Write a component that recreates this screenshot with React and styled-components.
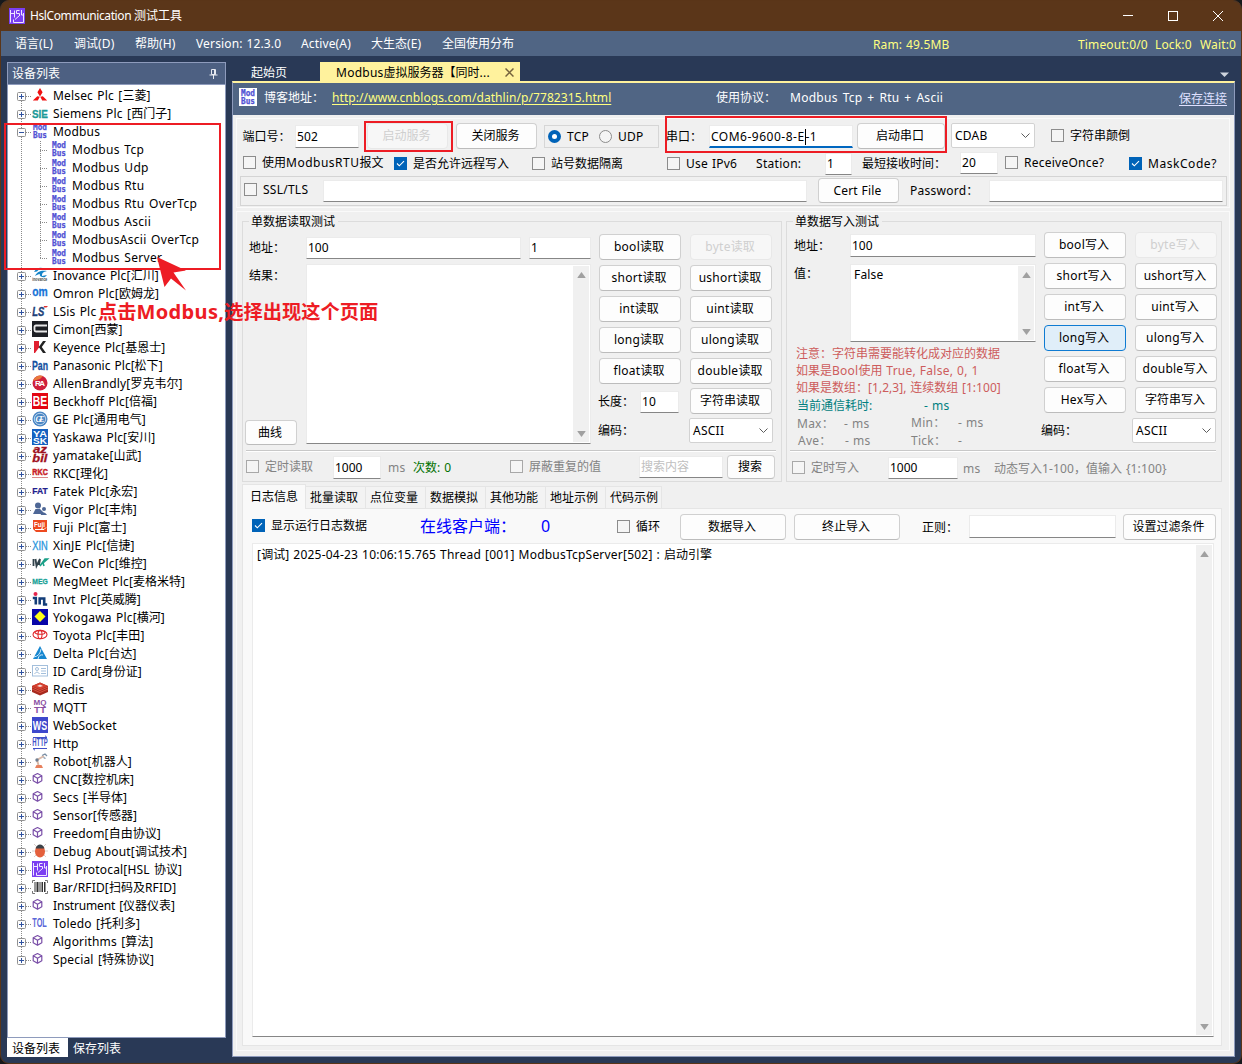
import React from "react";
import styled, { createGlobalStyle, css } from "styled-components";

const Global = createGlobalStyle`
  * { box-sizing: border-box; }
  html, body { margin: 0; padding: 0; background: #17191c; }
  body {
    font-family: "Noto Sans", "Noto Sans CJK SC", sans-serif;
    font-size: 12px;
    line-height: 18px;
    color: #000;
    overflow: hidden;
  }
`;

/* ---------- text ---------- */

const Latin = styled.span`
  letter-spacing: ${(p) => p.$ls}px;
  word-spacing: ${(p) => p.$ws}px;
`;

const CJK = /([\u2e80-\uffff]+)/;

function Mix({ children, ls = 0.25, ws = 0.5 }) {
  return String(children)
    .split(CJK)
    .filter(Boolean)
    .map((part, i) =>
      CJK.test(part) ? <span key={i}>{part}</span> : <Latin key={i} $ls={ls} $ws={ws}>{part}</Latin>
    );
}

const LabelBox = styled.div`
  margin-top: ${(p) => p.$t || 0}px;
  height: 18px;
  line-height: 18px;
  white-space: pre;
  width: 0;
  color: ${(p) => p.$color || "inherit"};
  font-size: ${(p) => p.$size || 12}px;
`;

function Label({ t, color, size, ls, ws, children }) {
  return (
    <LabelBox $t={t} $color={color} $size={size}>
      <Mix ls={ls} ws={ws}>{children}</Mix>
    </LabelBox>
  );
}

/* ---------- layout ---------- */

const tracks = (xs) => xs.slice(1).map((x, i) => `${x - xs[i]}px`).join(" ") + " auto";

const Line = styled.div`
  display: grid;
  grid-template-columns: ${(p) => tracks(p.$x)};
  justify-content: start;
  align-items: start;
  height: ${(p) => p.$h}px;
  padding-left: ${(p) => p.$x[0] - p.$from}px;
`;

const Window = styled.div`
  width: 1242px;
  height: 1064px;
  background: #293956;
  border: 1px solid #5a3518;
  border-radius: 9px;
  overflow: hidden;
  display: flex;
  flex-direction: column;
`;

const TitleBar = styled.header`
  height: 30px;
  flex: none;
  background: #5b3619;
  color: #fff;
  display: flex;
  align-items: center;
  padding: 0 1px 0 8px;
`;

const TitleText = styled.div`
  flex: 1;
  padding-left: 5px;
`;

const WindowButton = styled.div`
  width: 45px;
  display: flex;
  justify-content: center;
`;

const MenuBar = styled.nav`
  height: 25px;
  flex: none;
  background: #506584;
  color: #fff;
`;

const Workspace = styled.div`
  flex: 1;
  display: flex;
  min-height: 0;
`;

const SidePanel = styled.aside`
  width: 219px;
  margin: 6px 6px 0 6px;
  display: flex;
  flex-direction: column;
`;

const SideFrame = styled.div`
  height: 976px;
  border: 1px solid #8e9bbc;
  display: flex;
  flex-direction: column;
`;

const SideHead = styled.div`
  height: 21px;
  background: #4d6082;
  color: #fff;
  display: flex;
  align-items: center;
  justify-content: space-between;
  padding: 0 7px 0 4px;
`;

const Tree = styled.div`
  flex: 1;
  background: #fff;
  border-top: 1px solid #8e9bbc;
  padding: 2px 0 0 9px;
`;

const SideTabs = styled.div`
  display: flex;
`;

const SideTab = styled.div`
  width: 61px;
  height: 19px;
  padding: 2px 0 0 5px;
  line-height: 17px;
  white-space: nowrap;
  background: ${(p) => (p.$on ? "#fff" : "transparent")};
  color: ${(p) => (p.$on ? "#000" : "#fff")};
`;

/* ---------- tree ---------- */

const TreeRow = styled.div`
  display: flex;
  height: 18px;
`;

const Guide = styled.div`
  width: ${(p) => p.$w}px;
  display: flex;
  flex-direction: column;
  align-items: center;
`;

const Dots = styled.div`
  width: 1px;
  height: ${(p) => p.$h}px;
  background: ${(p) =>
    p.$off ? "none" : "repeating-linear-gradient(#8a8a8a 0 1px, transparent 1px 2px)"};
`;

const Across = styled.div`
  width: ${(p) => p.$w}px;
  height: 1px;
  margin-top: 9px;
  background: repeating-linear-gradient(90deg, #8a8a8a 0 1px, transparent 1px 2px);
`;

const ChildAcross = styled(Across)`
  margin-left: -14px;
  margin-right: 3px;
`;

const Toggle = styled.svg`
  width: 9px;
  height: 9px;
  display: block;
`;

const NodeIcon = styled.svg`
  width: 16px;
  height: 16px;
  display: block;
  overflow: visible;
`;

const NodeText = styled.div`
  padding-left: 5px;
  white-space: pre;
  height: 18px;
  line-height: 18px;
`;

function Glyph({ text, color, size = 8, x = 0.3, y = 11, w = 15, italic, font = "Liberation Sans", weight = 700, bold = 0 }) {
  return (
    <text x={x} y={y} fill={color} stroke={bold ? color : "none"} strokeWidth={bold} fontSize={size} fontWeight={weight}
      fontFamily={`"${font}", sans-serif`} fontStyle={italic ? "italic" : "normal"} textLength={w}
      lengthAdjust="spacingAndGlyphs">{text}</text>
  );
}

const modIcon = (
  <>
    <Glyph text="Mod" color="#5252d4" size={8} x={1} y={6.5} w={14} font="DejaVu Sans Mono" bold={0.25} />
    <Glyph text="Bus" color="#5252d4" size={8} x={1} y={14.5} w={14} font="DejaVu Sans Mono" bold={0.25} />
  </>
);

const hslIcon = (
  <>
    <rect width="16" height="16" fill="#7b3ff2" />
    <g stroke="#efe6ff" fill="none" strokeWidth="1">
      <path d="M1.500 2v12.500M1.500 5.500h4M5.500 2.500v7M10.500 2.500h-3v3h3v2.500M12.500 2v5h2.500M6 11.500l4.500-4M14.500 5v9.500h-10v-3" />
    </g>
  </>
);

const cube = (
  <g fill="none" stroke="#7a4fa8" strokeWidth="1.2" strokeLinejoin="round">
    <path d="M5.500 2.500l4.300 2.200v5l-4.300 2.600-4.300-2.600v-5zM1.200 4.700l4.300 2.500 4.300-2.500M5.500 7.200v5" />
  </g>
);

const icons = {
  melsec: <g fill="#f01010"><path d="M8 1l2.600 4.300L8 9.500 5.400 5.300zM5.300 9.300l2.500.4L5.800 13.500H.8zM8.300 9.700l2.500-.4 4.400 4.200h-5z" /></g>,
  siemens: <Glyph text="SIE" color="#1c9a98" size={11.500} y={12.500} w={16} x={0} bold={0.3} />,
  modbus: modIcon,
  inovance: (
    <>
      <path d="M2 5c3-5 7-5 11-3-3-.5-6 0-8 2.500zM3 9c2-5 7-6 12-5-4 1-5 2-5 5l5-1-2 2c-4 1-6-2-5-3-2 0-3 1-5 2z" fill="#1684c8" />
      <Glyph text="inovance" color="#444" size={5.500} y={14} />
    </>
  ),
  omron: <Glyph text="om" color="#1673d8" size={13} y={11} w={15.500} bold={0.3} />,
  ls: <><Glyph text="LS" color="#1d3f78" size={12} y={13} w={12} italic bold={0.4} /><path d="M12 3h4l-1.500 1.500h-3z" fill="#d33" /></>,
  cimon: <><rect width="16" height="16" fill="#1d1f24" /><path d="M15 4.500H4q-1.500 0-1.500 1.500v3q0 1.500 1.500 1.500h11" fill="none" stroke="#e8e8e8" strokeWidth="1.800" /></>,
  keyence: <><path d="M2 2h5v6.500L3 14H2z" fill="#e02030" /><path d="M11 2h3L9.800 8l4.200 6h-3L6.800 8z" fill="#222" /></>,
  pan: <Glyph text="Pan" color="#1450a0" size={13} y={12.500} w={16} x={0} font="Liberation Sans Narrow" bold={0.3} />,
  ra: <><circle cx="8" cy="8" r="7.500" fill="#cf1f3c" /><path d="M1 6a7.500 7.500 0 0 1 10-5L8 4z" fill="#e87a3c" /><text x="3" y="11" fontSize="8" fontWeight="700" fill="#fff" fontFamily="Liberation Sans" textLength="10">RA</text></>,
  be: <><rect width="16" height="16" fill="#e30613" /><Glyph text="BE" color="#fff" size={14.500} x={0.8} y={13} w={14.400} /></>,
  ge: <><circle cx="8" cy="8" r="7.500" fill="#4a86c4" /><circle cx="8" cy="8" r="5.700" fill="none" stroke="#d5e4f4" strokeWidth=".8" /><text x="3.500" y="11" fontSize="8" fill="#fff" fontStyle="italic" fontFamily="Liberation Serif" fontWeight="700" textLength="9">GE</text></>,
  yask: <><rect width="16" height="16" fill="#1661c0" /><Glyph text="YA" color="#fff" size={8.500} x={1} y={7.500} w={14} /><Glyph text="SK" color="#fff" size={8.500} x={1} y={14.700} w={14} /></>,
  azbil: <><Glyph text="az" color="#9e1020" size={10} x={1} y={6} w={14} italic bold={0.3} /><Glyph text="bil" color="#9e1020" size={11} y={14.800} w={15} italic bold={0.3} /></>,
  rkc: <><Glyph text="RKC" color="#c81d28" size={9} y={10} w={15.500} bold={0.5} /><path d="M0 12.500h16" stroke="#d98a8a" /></>,
  fat: <Glyph text="FAT" color="#20208c" size={8.500} y={11} w={15.500} bold={0.2} />,
  vigor: <g fill="#4e6796"><circle cx="6" cy="4.500" r="3" /><path d="M1 13l2.500-5 4.500 0 2 5H1zM7 7l4 4 3.500 3H9z" /><circle cx="12" cy="8" r="2" /><path d="M9 14q3-5 6 0z" /></g>,
  fuji: <><path d="M1 1h14v12H4l-3-3z" fill="#ee4a20" /><Glyph text="Fuji" color="#fff" size={7} x={2} y={8} w={11} /><path d="M3 10.500h9l2-2" stroke="#fff" fill="none" /></>,
  xin: <Glyph text="XIN" color="#2694dc" size={12} y={12.500} w={15.500} weight={400} bold={0.3} />,
  wecon: <><path d="M1.500 4v7M3.500 4l1 7L8 4l-1 6" stroke="#30414a" strokeWidth="1.800" fill="none" /><path d="M8 11l5-7h2.500l-4.500 4 1 3" stroke="#1ba088" strokeWidth="1.600" fill="none" /></>,
  meg: <Glyph text="MEG" color="#17a196" size={8} y={11} w={15.500} bold={0.3} />,
  invt: <><circle cx="3.500" cy="3" r="2" fill="#e6254c" /><path d="M0.800 7h3v6.500M7.700 13.500V7.500h4.500v6h3" stroke="#123d78" strokeWidth="2.600" fill="none" /></>,
  yoko: <><rect width="16" height="16" fill="#0806a8" /><path d="M8 2l5.500 5.500L8 13 2.500 7.500z" fill="#ffff18" /></>,
  toyota: <g fill="none" stroke="#e0282c" strokeWidth="1.100"><ellipse cx="8" cy="7.500" rx="7" ry="4.300" /><ellipse cx="8" cy="5.500" rx="5" ry="1.800" /><ellipse cx="8" cy="7.500" rx="2" ry="4.300" /></g>,
  delta: <><path d="M8 1l7 13H1z" fill="#1787d0" /><path d="M2 12q6-1 7-8M6 14q1-5 5-4" stroke="#cfe8f8" fill="none" strokeWidth="1" /></>,
  card: <g fill="none" stroke="#a3bfdc"><rect x=".5" y="2.500" width="15" height="10.500" /><circle cx="5" cy="6" r="1.500" /><path d="M2.500 11q2.500-4 5 0M9 5.500h5M9 8h5M9 10.500h5" /></g>,
  redis: <><path d="M0 5l8-3.500L16 5v6l-8 3.500L0 11z" fill="#a72a1e" /><path d="M0 5l8-3.500L16 5 8 8.500z" fill="#d5402e" /><path d="M0 8l8 3.500L16 8M0 6l8 3.500L16 6" stroke="#d9503e" fill="none" /><path d="M5 5l3-1.500L11 5 8 6z" fill="#fff" opacity=".8" /></>,
  mqtt: <><Glyph text="MQ" color="#8a50a2" size={8} x={1.500} y={6} w={13} /><Glyph text="TT" color="#8a50a2" size={8.500} x={2} y={14} w={12} /></>,
  ws: <><rect width="16" height="16" fill="#3d48cc" /><Glyph text="WS" color="#fff" size={13} x={0.8} y={12.700} w={14.400} /></>,
  http: <><Glyph text="HTTP" color="#4050c8" size={10} y={11.300} w={15.400} /><path d="M1 2.500h14l-2-1.800M15 13.500H1l2 1.800" stroke="#4050c8" fill="none" /></>,
  robot: <><path d="M3 15h8l-1.500-3h-5z" fill="#e8805c" /><path d="M6.500 12L5 7l7-4" stroke="#d9b9a8" strokeWidth="2" fill="none" /><circle cx="5" cy="7" r="1.700" fill="#6f7f92" /><path d="M10 2.500l3-1.500 2 2M11.500 4.500l2 1" stroke="#7a8fa5" fill="none" strokeWidth="1.300" /></>,
  cube,
  bug: <><path d="M2 1l3 3M14 1l-3 3M0 8h16M2 14l3-3M14 14l-3-3" stroke="#d8ceca" fill="none" /><ellipse cx="8" cy="8.500" rx="5" ry="6" fill="#e4603c" /><path d="M3.500 5.500Q5 1.500 8 1.500t4.500 4z" fill="#3c4248" /></>,
  hsl: hslIcon,
  bar: <g fill="#333"><path d="M2.500 3h1v10h-1zM4.500 3h2v10h-2zM7.500 3h1v10h-1zM9.500 3h1.500v10h-1.500zM12 3h1.500v10h-1.500z" /><path d="M.5 4V1.500H3M13 1.500h2.500V4M.5 12v2.500H3M13 14.500h2.500V12" fill="none" stroke="#777" /></g>,
  tol: <Glyph text="TOL" color="#5a68d8" size={12.500} y={12} w={14.500} font="Liberation Sans Narrow" />,
};

const nodes = [
  ["melsec", "Melsec Plc [三菱]"],
  ["siemens", "Siemens Plc [西门子]"],
  ["modbus", "Modbus", ["Modbus Tcp", "Modbus Udp", "Modbus Rtu", "Modbus Rtu OverTcp", "Modbus Ascii", "ModbusAscii OverTcp", "Modbus Server"]],
  ["inovance", "Inovance Plc[汇川]"],
  ["omron", "Omron Plc[欧姆龙]"],
  ["ls", "LSis Plc"],
  ["cimon", "Cimon[西蒙]"],
  ["keyence", "Keyence Plc[基恩士]"],
  ["pan", "Panasonic Plc[松下]"],
  ["ra", "AllenBrandly[罗克韦尔]"],
  ["be", "Beckhoff Plc[倍福]"],
  ["ge", "GE Plc[通用电气]"],
  ["yask", "Yaskawa Plc[安川]"],
  ["azbil", "yamatake[山武]"],
  ["rkc", "RKC[理化]"],
  ["fat", "Fatek Plc[永宏]"],
  ["vigor", "Vigor Plc[丰炜]"],
  ["fuji", "Fuji Plc[富士]"],
  ["xin", "XinJE Plc[信捷]"],
  ["wecon", "WeCon Plc[维控]"],
  ["meg", "MegMeet Plc[麦格米特]"],
  ["invt", "Invt Plc[英威腾]"],
  ["yoko", "Yokogawa Plc[横河]"],
  ["toyota", "Toyota Plc[丰田]"],
  ["delta", "Delta Plc[台达]"],
  ["card", "ID Card[身份证]"],
  ["redis", "Redis"],
  ["mqtt", "MQTT"],
  ["ws", "WebSocket"],
  ["http", "Http"],
  ["robot", "Robot[机器人]"],
  ["cube", "CNC[数控机床]"],
  ["cube", "Secs [半导体]"],
  ["cube", "Sensor[传感器]"],
  ["cube", "Freedom[自由协议]"],
  ["bug", "Debug About[调试技术]"],
  ["hsl", "Hsl Protocal[HSL 协议]"],
  ["bar", "Bar/RFID[扫码及RFID]"],
  ["cube", "Instrument [仪器仪表]"],
  ["tol", "Toledo [托利多]"],
  ["cube", "Algorithms [算法]"],
  ["cube", "Special [特殊协议]"],
];

const tight = { Instrument: -0.15, Panasonic: 0, Keyence: 0.1 };

function Node({ icon, text, kids, first, last }) {
  const ls = tight[text.split(" ")[0]] ?? 0.17;
  return (
    <>
      <TreeRow>
        <Guide $w={9}>
          <Dots $h={5} $off={first} />
          <Toggle viewBox="0 0 9 9">
            <rect x=".5" y=".5" width="8" height="8" rx="1" fill="#fdfdfd" stroke="#919191" />
            <path d={kids ? "M2 4.500h5" : "M2 4.500h5M4.500 2v5"} stroke="#2f52a0" />
          </Toggle>
          <Dots $h={4} $off={last} />
        </Guide>
        <Across $w={6} />
        <NodeIcon viewBox="0 0 16 16">{icons[icon]}</NodeIcon>
        <NodeText><Mix ls={ls} ws={1}>{text}</Mix></NodeText>
      </TreeRow>
      {kids && kids.map((kid, i) => (
        <TreeRow key={kid}>
          <Guide $w={9}><Dots $h={18} /></Guide>
          <Guide $w={28}><Dots $h={i === kids.length - 1 ? 10 : 18} /></Guide>
          <ChildAcross $w={8} />
          <NodeIcon viewBox="0 0 16 16">{modIcon}</NodeIcon>
          <NodeText><Mix ls={0.28} ws={1.2}>{kid}</Mix></NodeText>
        </TreeRow>
      ))}
    </>
  );
}

/* ---------- document area ---------- */

const DocArea = styled.main`
  width: 1003px;
  margin-top: 6px;
  display: flex;
  flex-direction: column;
`;

const DocTabs = styled.div`
  height: 19px;
  display: flex;
  align-items: flex-start;
  color: #fff;
`;

const IdleTab = styled.div`
  width: 88px;
  height: 19px;
  padding: 2px 0 0 19px;
  line-height: 17px;
`;

const ActiveTab = styled.div`
  width: 200px;
  height: 19px;
  background: #fff29d;
  color: #000;
  display: flex;
  align-items: center;
  justify-content: space-between;
  padding: 2px 6px 0 16px;
  white-space: pre;
`;

const TabMenu = styled.div`
  margin: 10px 6px 0 auto;
`;

const Svg = styled.svg`
  display: block;
`;

const DocFrame = styled.div`
  border-top: 2px solid #fff29d;
  border-left: 1px solid #8e9bbc;
  border-right: 1px solid #8e9bbc;
  border-bottom: 1px solid #8e9bbc;
  background: #f0f0f0;
  height: 976px;
`;

const DocHead = styled.div`
  background: #506584;
  color: #fff;
  height: 32px;
`;

const ModBadge = styled.svg`
  width: 18px;
  height: 18px;
  margin-top: 5px;
  background: #fff;
`;

const Link = styled.a`
  margin-top: ${(p) => p.$t}px;
  white-space: nowrap;
  width: max-content;
  height: 18px;
  color: ${(p) => p.$color};
  text-decoration: underline;
  text-underline-offset: 2px;
`;

const Panel = styled.section`
  margin: 3px 0 0 3px;
  width: 994px;
  height: ${(p) => p.$h}px;
  border: 1px solid #fafafa;
`;

const TlsPanel = styled.div`
  width: 987px;
  height: 30px;
  margin-left: 3px;
  border: 1px solid #d4d4d4;
`;

const Button = styled.button`
  margin: ${(p) => p.$t || 0}px 0 0 0;
  width: ${(p) => p.$w || 82}px;
  height: ${(p) => p.$h || 26}px;
  padding: 0;
  font: inherit;
  line-height: 18px;
  white-space: nowrap;
  color: #000;
  background: #fdfdfd;
  border: 1px solid #d0d0d0;
  border-bottom-color: #bcbcbc;
  border-radius: 4px;
  ${(p) => p.$nudge && css`
    padding: 0 2px 0 0;
  `}
  ${(p) => p.disabled && css`
    color: #cfcfcf;
    background: #f7f7f7;
    border-color: #e8e8e8;
  `}
  ${(p) => p.$hot && css`
    background: #e0eef9;
    border-color: #0f7bd2;
  `}
`;

const Field = styled.div`
  margin-top: ${(p) => p.$t || 0}px;
  width: ${(p) => p.$w}px;
  height: ${(p) => p.$h || 22}px;
  background: #fff;
  border: 1px solid #ebebeb;
  border-bottom: ${(p) => (p.$focus ? "2px solid #0067c0" : "1px solid #868686")};
  padding: ${(p) => (p.$pt === undefined ? 1 : p.$pt)}px 2px 0 1px;
  color: ${(p) => p.$color || "#000"};
  line-height: 18px;
  white-space: pre;
  display: flex;
`;

const Caret = styled.span`
  width: 1px;
  height: 16px;
  margin-top: 1px;
  background: #000;
`;

const Area = styled(Field)`
  justify-content: space-between;
  padding: 0 0 0 3px;
`;

const Scroll = styled.div`
  width: 16px;
  margin: 1px 1px 1px 0;
  background: #f0f0f0;
  display: flex;
  flex-direction: column;
  justify-content: space-between;
  align-items: center;
  padding: 6px 0 5px;
`;

function ScrollBar() {
  return (
    <Scroll>
      <Svg width="9" height="6"><path d="M4.500 0L8.500 5.500q.3.500-.5.500H1q-.8 0-.5-.5z" fill="#a0a0a0" /></Svg>
      <Svg width="9" height="6"><path d="M4.500 6L8.500.5Q8.800 0 8 0H1Q.2 0 .5.500z" fill="#a0a0a0" /></Svg>
    </Scroll>
  );
}

const Combo = styled.div`
  margin-top: ${(p) => p.$t || 0}px;
  width: 84px;
  height: 25px;
  background: #fff;
  border: 1px solid #d2d2d2;
  border-radius: 2px;
  padding: 0 4px 0 3px;
  display: flex;
  align-items: center;
  justify-content: space-between;
`;

function Select({ t, children }) {
  return (
    <Combo $t={t}>
      <Mix>{children}</Mix>
      <Svg width="9" height="6"><path d="M.5.500l4 4 4-4" fill="none" stroke="#5c5c5c" /></Svg>
    </Combo>
  );
}

const CheckBox = styled.svg`
  margin-top: ${(p) => p.$t}px;
  width: 13px;
  height: 13px;
  display: block;
`;

function Check({ t, on, dim }) {
  return (
    <CheckBox $t={t} viewBox="0 0 13 13">
      <rect x=".5" y=".5" width="12" height="12" fill={on ? "#0063b8" : "#f5f5f5"} stroke={on ? "#0063b8" : dim ? "#a8a8a8" : "#8c8c8c"} />
      {on && <path d="M3 6.500l2.300 2.300L10 4.200" fill="none" stroke="#fff" strokeWidth="1.100" />}
    </CheckBox>
  );
}

const RadioBox = styled.div`
  margin-top: 6px;
  width: 115px;
  height: 23px;
  border: 1px solid #d6d6d6;
`;

function Radio({ on }) {
  return (
    <CheckBox $t={4} viewBox="0 0 13 13">
      <circle cx="6.500" cy="6.500" r={on ? 6.500 : 6} fill={on ? "#0063b8" : "#f5f5f5"} stroke={on ? "none" : "#8c8c8c"} />
      {on && <circle cx="6.500" cy="6.500" r="2.500" fill="#fff" />}
    </CheckBox>
  );
}

const Groups = styled.div`
  display: flex;
  gap: 4px;
  padding: 9px 0 0 5px;
`;

const Group = styled.div`
  width: ${(p) => p.$w}px;
  height: 261px;
  border: 1px solid #dcdcdc;
`;

const Legend = styled.div`
  width: max-content;
  height: 18px;
  line-height: 20px;
  margin: -10px 0 0 6px;
  padding: 0 3px 0 2px;
  background: #f0f0f0;
`;

const GroupBody = styled.div`
  display: flex;
  height: 220px;
`;

const Column = styled.div`
  width: ${(p) => p.$w}px;
  padding-top: ${(p) => p.$pt || 0}px;
`;

const ButtonGrid = styled.div`
  display: grid;
  grid-template-columns: 82px 82px;
  gap: 5px 9px;
  margin: 0 0 ${(p) => p.$mb}px ${(p) => p.$ml || 0}px;
`;

const Stack = styled.div`
  height: 181px;
  display: flex;
  flex-direction: column;
  justify-content: space-between;
`;

const Rule = styled.div`
  height: 2px;
  margin: 0 5px 0 3px;
  border-top: 1px solid #c8c8c8;
  border-bottom: 1px solid #fff;
`;

const Note = styled.div`
  height: 17px;
  line-height: 19px;
  padding-left: 9px;
  color: #cd5c5c;
  white-space: nowrap;
`;

const CodeLabel = styled.div`
  margin: 4px 0 0 -3px;
  height: 18px;
  white-space: nowrap;
`;

const TabStrip = styled.div`
  height: 26px;
  padding-left: 5px;
  display: flex;
  align-items: flex-end;
`;

const Tab = styled.div`
  width: ${(p) => p.$w}px;
  height: ${(p) => (p.$on ? 25 : 22)}px;
  margin-bottom: ${(p) => (p.$on ? -1 : 0)}px;
  padding: ${(p) => (p.$on ? "3px 0 0 7px" : "2px 0 0 4px")};
  line-height: 18px;
  background: ${(p) => (p.$on ? "#f9f9f9" : "#f3f3f3")};
  border: 1px solid #e5e5e5;
  border-bottom: none;
  border-left-width: ${(p) => (p.$on ? 1 : 0)}px;
  white-space: nowrap;
`;

const Page = styled.div`
  width: 980px;
  height: 538px;
  margin-left: 5px;
  background: #f9f9f9;
  border: 1px solid #e5e5e5;
`;

const Log = styled(Area)`
  margin-left: 9px;
  padding: 0 0 0 4px;
`;

const LogText = styled.div`
  flex: 1;
  padding-top: 2px;
`;

/* ---------- annotations over the window ---------- */

const Mark = styled.div`
  position: absolute;
  left: ${(p) => p.$x}px;
  top: ${(p) => p.$y}px;
  width: ${(p) => p.$w}px;
  height: ${(p) => p.$h}px;
  border: 2px solid #ed1c24;
`;

const Caption = styled.div`
  position: absolute;
  left: 98px;
  top: 298px;
  font-size: 19.25px;
  line-height: 28px;
  font-weight: 700;
  color: #ed1c24;
  white-space: nowrap;

  ${Latin} {
    font-size: 20px;
  }
`;

const Pointer = styled.svg`
  position: absolute;
  left: 157px;
  top: 257px;
`;

const reads = ["bool", "byte", "short", "ushort", "int", "uint", "long", "ulong", "float", "double"];
const GREY = "#838383";

export default function App() {
  return (
    <>
      <Global />
      <Window>
        <TitleBar>
          <Svg width="16" height="16" viewBox="0 0 16 16">{hslIcon}</Svg>
          <TitleText><Mix ls={-0.4} ws={0}>HslCommunication 测试工具</Mix></TitleText>
          <WindowButton><Svg width="10" height="10"><path d="M0 4.500h10" stroke="#fff" /></Svg></WindowButton>
          <WindowButton><Svg width="10" height="10"><rect x=".5" y=".5" width="9" height="9" fill="none" stroke="#fff" /></Svg></WindowButton>
          <WindowButton><Svg width="10" height="10"><path d="M0 0l10 10M10 0L0 10" stroke="#fff" /></Svg></WindowButton>
        </TitleBar>
        <MenuBar>
          <Line $from={1} $h={25} $x={[15, 74, 135, 196, 301, 371, 442, 873, 1078, 1155, 1200]}>
            {["语言(L)", "调试(D)", "帮助(H)", "Version: 12.3.0", "Active(A)", "大生态(E)", "全国使用分布"].map((m) => (
              <Label key={m} t={4} ls={0.15}>{m}</Label>
            ))}
            {["Ram: 49.5MB", "Timeout:0/0", "Lock:0", "Wait:0"].map((m) => (
              <Label key={m} t={5} ls={0.15} color="#ffff80">{m}</Label>
            ))}
          </Line>
        </MenuBar>
        <Workspace>
          <SidePanel>
            <SideFrame>
              <SideHead>
                设备列表
                <Svg width="9" height="12"><path d="M2.500 1.500h4v5h-4zM5.500 1.500v5M.5 7h8M4.500 7v4" fill="none" stroke="#e6e9f0" /></Svg>
              </SideHead>
              <Tree>
                {nodes.map(([icon, text, kids], i) => (
                  <Node key={text} icon={icon} text={text} kids={kids} first={i === 0} last={i === nodes.length - 1} />
                ))}
              </Tree>
            </SideFrame>
            <SideTabs>
              <SideTab $on>设备列表</SideTab>
              <SideTab>保存列表</SideTab>
            </SideTabs>
          </SidePanel>
          <DocArea>
            <DocTabs>
              <IdleTab>起始页</IdleTab>
              <ActiveTab>
                <span><Mix>Modbus虚拟服务器【同时...</Mix></span>
                <Svg width="9" height="9"><path d="M.5.500l8 8M8.500.500l-8 8" stroke="#75633d" strokeWidth="1.500" /></Svg>
              </ActiveTab>
              <TabMenu><Svg width="9" height="5"><path d="M0 .5h9L4.500 5z" fill="#ced4dd" /></Svg></TabMenu>
            </DocTabs>
            <DocFrame>
              <DocHead>
                <Line $from={233} $h={32} $x={[239, 264, 332, 716, 790, 1179]}>
                  <ModBadge viewBox="-1 -1 18 18">{modIcon}</ModBadge>
                  <Label t={6}>博客地址：</Label>
                  <Link $t={6} $color="#ffff80"><Mix ls={0.08}>http://www.cnblogs.com/dathlin/p/7782315.html</Mix></Link>
                  <Label t={6}>使用协议：</Label>
                  <Label t={6} ls={0.28} ws={1.500}>Modbus Tcp + Rtu + Ascii</Label>
                  <Link $t={7} $color="#dfe0ff">保存连接</Link>
                </Line>
              </DocHead>
              <Panel $h={90}>
                <Line $from={237} $h={32} $x={[242.500, 295, 367, 456, 544, 666, 709, 857, 951, 1051, 1070]}>
                  <Label t={9}>端口号：</Label>
                  <Field $t={6} $w={64} $h={23} $pt={2}><Mix ls={0.1}>502</Mix></Field>
                  <Button $t={4} $w={81} $h={26} $nudge disabled>启动服务</Button>
                  <Button $t={4} $w={81} $h={26} $nudge>关闭服务</Button>
                  <RadioBox>
                    <Line $from={545} $h={21} $x={[548, 567, 599, 618]}>
                      <Radio on />
                      <Label t={2}>TCP</Label>
                      <Radio />
                      <Label t={2}>UDP</Label>
                    </Line>
                  </RadioBox>
                  <Label t={9}>串口：</Label>
                  <Field $t={6} $w={144} $h={23} $pt={2} $focus><Mix ls={0.5}>COM6-9600-8-E</Mix><Caret /><Mix>-1</Mix></Field>
                  <Button $t={4} $w={88} $h={26} $nudge>启动串口</Button>
                  <Select t={4}>CDAB</Select>
                  <Check t={10} />
                  <Label t={8}>字符串颠倒</Label>
                </Line>
                <Line $from={237} $h={25} $x={[243, 262, 394, 413, 532, 551, 667, 686, 756, 825, 862, 960, 1005, 1024, 1129, 1148]}>
                  <Check t={5} />
                  <Label t={3} ls={0.5}>使用ModbusRTU报文</Label>
                  <Check t={6} on />
                  <Label t={4}>是否允许远程写入</Label>
                  <Check t={6} />
                  <Label t={4}>站号数据隔离</Label>
                  <Check t={6} />
                  <Label t={4}>Use IPv6</Label>
                  <Label t={4} ls={0.3}>Station:</Label>
                  <Field $t={2} $w={27}><Mix>1</Mix></Field>
                  <Label t={4}>最短接收时间：</Label>
                  <Field $t={1} $w={38}><Mix>20</Mix></Field>
                  <Check t={5} />
                  <Label t={3}>ReceiveOnce?</Label>
                  <Check t={6} on />
                  <Label t={4} ls={0.55}>MaskCode?</Label>
                </Line>
                <TlsPanel>
                  <Line $from={241} $h={27} $x={[244, 263, 323, 818, 910, 989]}>
                    <Check t={6} />
                    <Label t={4}>SSL/TLS</Label>
                    <Field $t={3} $w={484} />
                    <Button $t={1} $w={81} $h={25} $nudge><Mix ls={0.15}>Cert File</Mix></Button>
                    <Label t={5}>Password：</Label>
                    <Field $t={3} $w={234} />
                  </Line>
                </TlsPanel>
              </Panel>
              <Panel $h={840}>
                <Groups>
                  <Group $w={540}>
                    <Legend>单数据读取测试</Legend>
                    <GroupBody>
                      <Column $w={355}>
                        <Line $from={243} $h={34} $x={[249, 306, 529]}>
                          <Label t={9}>地址：</Label>
                          <Field $t={7} $w={215}><Mix ls={0}>100</Mix></Field>
                          <Field $t={7} $w={62}><Mix>1</Mix></Field>
                        </Line>
                        <Line $from={243} $h={186} $x={[245, 306]}>
                          <Stack>
                            <Line $from={245} $h={20} $x={[249]}><Label t={3}>结果：</Label></Line>
                            <Button $w={52} $h={25} $nudge>曲线</Button>
                          </Stack>
                          <Area $w={285} $h={180}><span /><ScrollBar /></Area>
                        </Line>
                      </Column>
                      <Column $w={175} $pt={4}>
                        <ButtonGrid $mb={4} $ml={1}>
                          {reads.map((r) => <Button key={r} $nudge disabled={r === "byte"}><Mix>{r + "读取"}</Mix></Button>)}
                        </ButtonGrid>
                        <Line $from={598} $h={30} $x={[598, 640, 690]}>
                          <Label t={5}>长度：</Label>
                          <Field $t={3} $w={39}><Mix>10</Mix></Field>
                          <Button $nudge>字符串读取</Button>
                        </Line>
                        <Line $from={598} $h={26} $x={[598, 689]}>
                          <Label t={4}>编码：</Label>
                          <Select>ASCII</Select>
                        </Line>
                      </Column>
                    </GroupBody>
                    <Rule />
                    <Line $from={243} $h={28} $x={[246, 265, 333, 388, 413, 510, 529, 639, 727]}>
                      <Check t={8} dim />
                      <Label t={6} color={GREY}>定时读取</Label>
                      <Field $t={4} $w={48} $h={23} $pt={2}><Mix ls={0}>1000</Mix></Field>
                      <Label t={7} color={GREY}>ms</Label>
                      <Label t={7} color="#007000">次数: 0</Label>
                      <Check t={8} dim />
                      <Label t={6} color={GREY}>屏蔽重复的值</Label>
                      <Field $t={4} $w={84} $color="#c0c0c0">搜索内容</Field>
                      <Button $t={3} $w={48} $h={24} $nudge>搜索</Button>
                    </Line>
                  </Group>
                  <Group $w={436}>
                    <Legend>单数据写入测试</Legend>
                    <GroupBody>
                      <Column $w={257}>
                        <Line $from={787} $h={34} $x={[794, 850]}>
                          <Label t={7}>地址：</Label>
                          <Field $t={4} $w={186} $h={23} $pt={2}><Mix ls={0}>100</Mix></Field>
                        </Line>
                        <Line $from={787} $h={80} $x={[794, 850]}>
                          <Label t={1}>值：</Label>
                          <Area $w={186} $h={78}><Label t={1} ls={0.15}>False</Label><ScrollBar /></Area>
                        </Line>
                        <Note>注意：字符串需要能转化成对应的数据</Note>
                        <Note><Mix>如果是Bool使用 True, False, 0, 1</Mix></Note>
                        <Note><Mix ls={0.05}>如果是数组：[1,2,3], 连续数组 [1:100]</Mix></Note>
                        <Line $from={787} $h={18} $x={[797, 924]}>
                          <Label t={2} color="#008080">当前通信耗时:</Label>
                          <Label t={2} color="#008080">- ms</Label>
                        </Line>
                        <Line $from={787} $h={17} $x={[797, 844, 911, 958]}>
                          <Label t={2} color={GREY}>Max：</Label>
                          <Label t={2} color={GREY}>- ms</Label>
                          <Label t={1} color={GREY}>Min：</Label>
                          <Label t={1} color={GREY}>- ms</Label>
                        </Line>
                        <Line $from={787} $h={17} $x={[798, 845, 911, 958]}>
                          <Label t={2} color={GREY}>Ave：</Label>
                          <Label t={2} color={GREY}>- ms</Label>
                          <Label t={2} color={GREY}>Tick：</Label>
                          <Label t={2} color={GREY}>-</Label>
                        </Line>
                      </Column>
                      <Column $w={174} $pt={2}>
                        <ButtonGrid $mb={5}>
                          {reads.map((r) => <Button key={r} $nudge disabled={r === "byte"} $hot={r === "long"}><Mix>{r + "写入"}</Mix></Button>)}
                          <Button $nudge><Mix>Hex写入</Mix></Button>
                          <Button $nudge>字符串写入</Button>
                        </ButtonGrid>
                        <Line $from={1044} $h={26} $x={[1044, 1132]}>
                          <CodeLabel>编码：</CodeLabel>
                          <Select>ASCII</Select>
                        </Line>
                      </Column>
                    </GroupBody>
                    <Rule />
                    <Line $from={787} $h={28} $x={[792, 811, 888, 963, 994]}>
                      <Check t={9} dim />
                      <Label t={7} color={GREY}>定时写入</Label>
                      <Field $t={5} $w={70}><Mix ls={0}>1000</Mix></Field>
                      <Label t={8} color={GREY}>ms</Label>
                      <Label t={8} ls={0.15} color={GREY}>{"动态写入1-100，值输入 {1:100}"}</Label>
                    </Line>
                  </Group>
                </Groups>
                <TabStrip>
                  <Tab $on $w={64}>日志信息</Tab>
                  {["批量读取", "点位变量", "数据模拟", "其他功能", "地址示例"].map((t) => <Tab key={t} $w={60}>{t}</Tab>)}
                  <Tab $w={56}>代码示例</Tab>
                </TabStrip>
                <Page>
                  <Line $from={243} $h={34} $x={[252, 271, 420, 541, 617, 636, 680, 794, 922, 969, 1123]}>
                    <Check t={10} on />
                    <Label t={8}>显示运行日志数据</Label>
                    <Label t={8} size={16} color="#0000ff">在线客户端：</Label>
                    <Label t={8} size={16} color="#0000ff">0</Label>
                    <Check t={11} />
                    <Label t={9}>循环</Label>
                    <Button $t={5} $w={106} $nudge>数据导入</Button>
                    <Button $t={5} $w={106} $nudge>终止导入</Button>
                    <Label t={10}>正则：</Label>
                    <Field $t={6} $w={147} $h={23} />
                    <Button $t={5} $w={93} $nudge>设置过滤条件</Button>
                  </Line>
                  <Log $w={962} $h={494}>
                    <LogText><Mix ls={0.22} ws={0.6}>[调试] 2025-04-23 10:06:15.765 Thread [001] ModbusTcpServer[502] : 启动引擎</Mix></LogText>
                    <ScrollBar />
                  </Log>
                </Page>
              </Panel>
            </DocFrame>
          </DocArea>
        </Workspace>
      </Window>
      <Mark $x={4} $y={123} $w={217} $h={147} />
      <Mark $x={364} $y={121} $w={89} $h={31} />
      <Mark $x={665} $y={116} $w={282} $h={37} />
      <Pointer width="30" height="35"><path d="M0 0l29 13.500-12.500 2L29 33.500 14 21.500 7.500 30z" fill="#ed1c24" /></Pointer>
      <Caption><Mix ls={0.35} ws={0}>点击Modbus,选择出现这个页面</Mix></Caption>
    </>
  );
}
